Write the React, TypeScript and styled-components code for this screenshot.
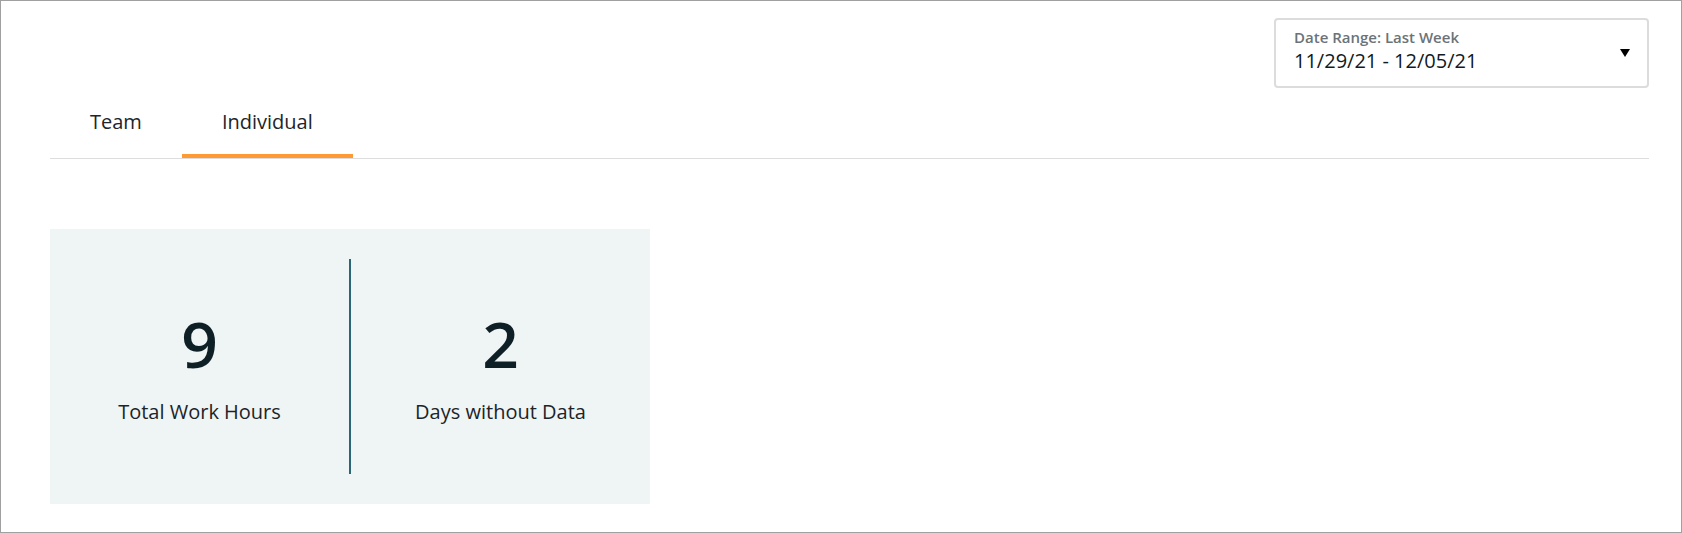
import React from "react";
import styled, { createGlobalStyle } from "styled-components";

const GlobalStyle = createGlobalStyle`
  * { box-sizing: border-box; }
  html, body { margin: 0; padding: 0; background: #ffffff; }
  body { font-family: "Open Sans", "Noto Sans", sans-serif; }
`;

const Frame = styled.div`
  width: 1682px;
  height: 533px;
  border: 1px solid #a0a0a0;
  padding: 17px 32px 0 49px;
  background: #ffffff;
  display: flex;
  flex-direction: column;
`;

const HeaderRow = styled.div`
  display: flex;
  justify-content: flex-end;
`;

const Select = styled.div`
  width: 375px;
  height: 70px;
  border: 2px solid #dcdcdc;
  border-radius: 4px;
  padding: 7px 17px 0 18px;
  display: flex;
  align-items: center;
  justify-content: space-between;
  cursor: pointer;
`;

const SelectText = styled.div`
  display: flex;
  flex-direction: column;
  align-self: flex-start;
`;

const SelectLabel = styled.span`
  font-size: 15px;
  line-height: 21px;
  font-weight: 600;
  color: #6b7378;
`;

const SelectValue = styled.span`
  font-size: 20px;
  line-height: 26px;
  color: #111a1f;
`;

const Caret = styled.span`
  width: 0;
  height: 0;
  margin-top: -7px;
  border-left: 5.5px solid transparent;
  border-right: 5.5px solid transparent;
  border-top: 8px solid #000000;
`;

const TabBar = styled.div`
  display: flex;
  border-bottom: 1px solid #dddddd;
`;

const Tab = styled.div<{ $active?: boolean }>`
  padding: 20px 40px 18px;
  font-size: 20px;
  line-height: 28px;
  color: #1e2529;
  border-bottom: 4px solid ${(p) => (p.$active ? "#ff9933" : "transparent")};
  cursor: pointer;
`;

const StatsCard = styled.div`
  margin-top: 70px;
  width: 600px;
  height: 275px;
  background: #eff4f4;
  padding: 30px 0;
  display: grid;
  grid-template-columns: 1fr 2px 1fr;
`;

const Divider = styled.div`
  background: #2b6677;
`;

const Stat = styled.div`
  display: flex;
  flex-direction: column;
  align-items: center;
  justify-content: center;
`;

const StatValue = styled.div`
  font-size: 64px;
  line-height: 64px;
  font-weight: 600;
  color: #0e1f26;
  margin-bottom: 26px;
`;

const StatLabel = styled.div`
  font-size: 20px;
  line-height: 20px;
  color: #1b2429;
`;

export default function App() {
  return (
    <>
      <GlobalStyle />
      <Frame>
        <HeaderRow>
          <Select>
            <SelectText>
              <SelectLabel>Date Range: Last Week</SelectLabel>
              <SelectValue>11/29/21 - 12/05/21</SelectValue>
            </SelectText>
            <Caret />
          </Select>
        </HeaderRow>
        <TabBar>
          <Tab>Team</Tab>
          <Tab $active>Individual</Tab>
        </TabBar>
        <StatsCard>
          <Stat>
            <StatValue>9</StatValue>
            <StatLabel>Total Work Hours</StatLabel>
          </Stat>
          <Divider />
          <Stat>
            <StatValue>2</StatValue>
            <StatLabel>Days without Data</StatLabel>
          </Stat>
        </StatsCard>
      </Frame>
    </>
  );
}
